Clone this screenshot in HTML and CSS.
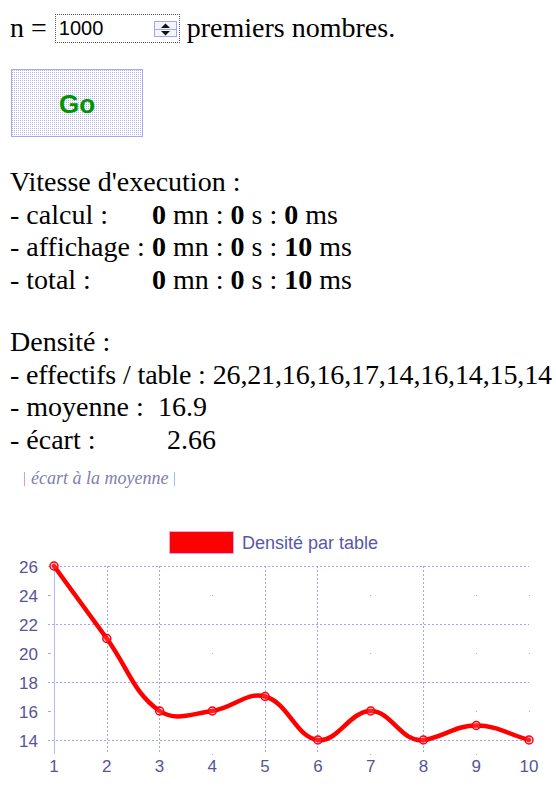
FILE: index.html
```html
<!DOCTYPE html>
<html lang="fr">
<head>
<meta charset="utf-8">
<title>Premiers nombres</title>
<link rel="stylesheet" href="styles.css">
</head>
<body>
<div class="row-n">n = <span class="numbox"><span class="numval">1000</span><span class="spin"><svg width="23" height="16" viewBox="0 0 23 16"><rect x="0.5" y="0.5" width="22" height="15" fill="#f4f4fd" stroke="#a4a4f0"/><line x1="1" y1="8.5" x2="22" y2="8.5" stroke="#a4a4f0"/><polygon points="7,7 16,7 11.5,2.5" fill="#111"/><polygon points="7,10 16,10 11.5,14.5" fill="#111"/></svg></span></span> premiers nombres.</div>

<div class="go-wrap"><button class="go" type="button">Go</button></div>

<div class="block">
  <div class="line">Vitesse d'execution :</div>
  <div class="line"><span class="lbl">- calcul :</span><b>0</b> mn : <b>0</b> s : <b>0</b> ms</div>
  <div class="line"><span class="lbl">- affichage : </span><b>0</b> mn : <b>0</b> s : <b>10</b> ms</div>
  <div class="line"><span class="lbl">- total :</span><b>0</b> mn : <b>0</b> s : <b>10</b> ms</div>
</div>

<div class="block">
  <div class="line">Densité :</div>
  <div class="line tight">- effectifs / table : 26,21,16,16,17,14,16,14,15,14</div>
  <div class="line"><span class="lbl-moy">- moyenne :</span>16.9</div>
  <div class="line"><span class="lbl-ecart">- écart :</span>2.66</div>
</div>

<div class="ecart-link"><span class="pipe pipe-l"></span><i>écart à la moyenne</i><span class="pipe pipe-r"></span></div>

<svg class="chart" width="556" height="267" viewBox="0 0 556 267">
  <rect x="169.5" y="11.5" width="64" height="22" fill="#ff0000" stroke="#f0a0f0"/>
  <text class="legend" x="242" y="29">Densité par table</text>

  <g class="grid">
    <line x1="48" y1="46.5" x2="529" y2="46.5"/>
    <line x1="48" y1="104.5" x2="529" y2="104.5"/>
    <line x1="48" y1="162.5" x2="529" y2="162.5"/>
    <line x1="48" y1="220.5" x2="529" y2="220.5"/>
    <line x1="107.5" y1="46" x2="107.5" y2="234"/>
    <line x1="159.5" y1="46" x2="159.5" y2="234"/>
    <line x1="265.5" y1="46" x2="265.5" y2="234"/>
    <line x1="317.5" y1="46" x2="317.5" y2="234"/>
    <line x1="423.5" y1="46" x2="423.5" y2="234"/>
  </g>
  <line class="axis" x1="54.5" y1="46" x2="54.5" y2="234"/>
  <g class="dots">
    <rect x="212" y="75" width="1" height="1"/><rect x="212" y="133" width="1" height="1"/><rect x="212" y="191" width="1" height="1"/><rect x="212" y="234" width="1" height="1"/>
    <rect x="370" y="75" width="1" height="1"/><rect x="370" y="133" width="1" height="1"/><rect x="370" y="234" width="1" height="1"/>
    <rect x="476" y="75" width="1" height="1"/><rect x="476" y="133" width="1" height="1"/><rect x="476" y="191" width="1" height="1"/><rect x="476" y="234" width="1" height="1"/>
    <rect x="529" y="75" width="1" height="1"/><rect x="529" y="133" width="1" height="1"/><rect x="529" y="191" width="1" height="1"/>
    <rect x="48" y="75" width="3" height="1"/><rect x="48" y="133" width="3" height="1"/><rect x="48" y="191" width="3" height="1"/>
  </g>

  <g class="ylab">
    <text x="38" y="52.5">26</text>
    <text x="38" y="81.5">24</text>
    <text x="38" y="110.5">22</text>
    <text x="38" y="139.5">20</text>
    <text x="38" y="168.5">18</text>
    <text x="38" y="197.5">16</text>
    <text x="38" y="226.5">14</text>
  </g>
  <g class="xlab">
    <text x="54" y="252">1</text>
    <text x="106.8" y="252">2</text>
    <text x="159.6" y="252">3</text>
    <text x="212.3" y="252">4</text>
    <text x="265.1" y="252">5</text>
    <text x="317.9" y="252">6</text>
    <text x="370.7" y="252">7</text>
    <text x="423.4" y="252">8</text>
    <text x="476.2" y="252">9</text>
    <text x="529" y="252">10</text>
  </g>

  <path class="curve" d="M54,46 C75.1,75 85.7,89.5 106.8,118.5 C127.9,147.5 133,172.7 159.6,191 C175.2,201.7 191.6,193.8 212.3,191 C233.8,188 246.3,171.3 265.1,176.5 C288.6,182.9 295.4,216.9 317.9,220 C337.7,222.7 349.6,191 370.7,191 C391.8,191 401.3,223 423.4,220 C443.5,217.2 455.1,205.5 476.2,205.5 C497.3,205.5 507.9,214.2 529,220"/>
  <g class="pts">
    <circle cx="54" cy="46" r="4"/>
    <circle cx="106.8" cy="118.5" r="4"/>
    <circle cx="159.6" cy="191" r="4"/>
    <circle cx="212.3" cy="191" r="4"/>
    <circle cx="265.1" cy="176.5" r="4"/>
    <circle cx="317.9" cy="220" r="4"/>
    <circle cx="370.7" cy="191" r="4"/>
    <circle cx="423.4" cy="220" r="4"/>
    <circle cx="476.2" cy="205.5" r="4"/>
    <circle cx="529" cy="220" r="4"/>
  </g>
</svg>
</body>
</html>
```

FILE: styles.css
```css
html, body {
  margin: 0;
  padding: 0;
  background: #ffffff;
}

body {
  width: 556px;
  overflow: hidden;
  font-family: "Liberation Serif", "Times New Roman", serif;
  font-size: 28px;
  color: #000;
  padding-top: 12.2px;
  box-sizing: border-box;
}

.row-n,
.block,
.go-wrap,
.ecart-link {
  padding-left: 10px;
  white-space: nowrap;
}

.row-n {
  line-height: 32.7px;
}

.numbox {
  display: inline-flex;
  align-items: center;
  justify-content: space-between;
  box-sizing: border-box;
  width: 125px;
  height: 29px;
  border: 1px dotted #555;
  background: #fff;
  padding: 0 2px 0 3px;
  vertical-align: 2px;
  margin-left: 1px;
}

.numval {
  font-family: "Liberation Sans", Arial, sans-serif;
  font-size: 20px;
  line-height: 27px;
}

.spin {
  display: block;
  height: 16px;
}

.spin svg {
  display: block;
}

.go-wrap {
  margin-top: 24.1px;
}

.go {
  display: flex;
  align-items: center;
  justify-content: center;
  box-sizing: border-box;
  width: 132px;
  height: 68px;
  margin: 0 0 0 1px;
  padding: 3px 0 0 0;
  border: 1px solid #a8a8ee;
  background-color: #fff;
  background-image:
    linear-gradient(90deg, transparent 50%, #fff 50%),
    linear-gradient(#b4b4f0 50%, #fff 50%);
  background-size: 2px 2px, 2px 2px;
  font-family: "Liberation Sans", Arial, sans-serif;
  font-weight: bold;
  font-size: 26px;
  color: #009400;
}

.block {
  margin-top: 28.9px;
  line-height: 32.7px;
}

.block + .block {
  margin-top: 29.2px;
}

.tight {
  letter-spacing: -0.13px;
}

.lbl {
  display: inline-block;
  width: 142px;
}

.lbl-moy {
  display: inline-block;
  width: 148px;
}

.lbl-ecart {
  display: inline-block;
  width: 157px;
}

.ecart-link {
  margin-top: 10.2px;
  line-height: 22px;
  font-size: 18px;
  color: #8080b0;
}

.ecart-link i {
  margin: 0 6px;
}

.pipe {
  display: inline-block;
  width: 1px;
  height: 14px;
  vertical-align: -2px;
}

.pipe-l {
  margin-left: 14px;
  background: #e094ea;
}

.pipe-r {
  background: #98c4ec;
}

.chart {
  display: block;
  margin-top: 31.1px;
}

.legend {
  font-family: "Liberation Sans", Arial, sans-serif;
  font-size: 18px;
  fill: #5858a8;
}

.grid line {
  stroke: #a4a4f0;
  stroke-width: 1;
  stroke-dasharray: 2 2;
}

.axis {
  stroke: #b8b8f4;
  stroke-width: 1;
}

.dots rect {
  fill: #a4a4f0;
}

.ylab text,
.xlab text {
  font-family: "Liberation Sans", Arial, sans-serif;
  font-size: 17px;
  fill: #555598;
}

.ylab text {
  text-anchor: end;
}

.xlab text {
  text-anchor: middle;
}

.curve {
  fill: none;
  stroke: #ff0000;
  stroke-width: 4.5;
  stroke-linecap: round;
  stroke-linejoin: round;
}

.pts circle {
  fill: rgba(255, 120, 160, 0.25);
  stroke: #ff0000;
  stroke-width: 1.5;
}
```
